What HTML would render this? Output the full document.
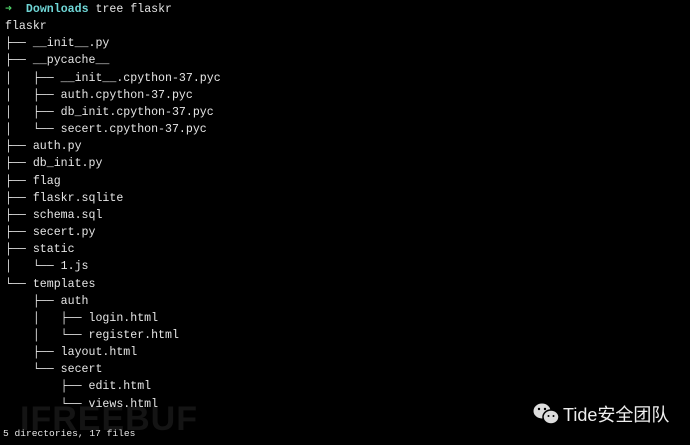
<!DOCTYPE html>
<html><head><meta charset="utf-8"><style>
html,body{margin:0;padding:0;background:#000;width:690px;height:445px;overflow:hidden;}
pre{position:absolute;left:5px;top:1px;margin:0;font-family:"Liberation Mono","DejaVu Sans Mono",monospace;font-size:11.6px;line-height:17.16px;color:#e6e6e6;}
.g{color:#4fd26a;font-weight:bold}.c{color:#6fd6d6;font-weight:bold}
.foot{position:absolute;left:3px;top:428px;font-family:"Liberation Mono",monospace;font-size:9.6px;color:#e6e6e6;}
.wm{position:absolute;left:20px;top:400px;font-family:"Liberation Sans",sans-serif;font-weight:bold;font-size:34px;color:#141414;letter-spacing:1px}
.tide{position:absolute;left:563px;top:401px;font-family:"Liberation Sans","Noto Sans CJK SC",sans-serif;font-size:18px;color:#eee}
</style></head><body>
<div class="wm">IFREEBUF</div>
<pre><span class="g">➜</span>  <span class="c">Downloads</span> tree flaskr
flaskr
├── __init__.py
├── __pycache__
│   ├── __init__.cpython-37.pyc
│   ├── auth.cpython-37.pyc
│   ├── db_init.cpython-37.pyc
│   └── secert.cpython-37.pyc
├── auth.py
├── db_init.py
├── flag
├── flaskr.sqlite
├── schema.sql
├── secert.py
├── static
│   └── 1.js
└── templates
    ├── auth
    │   ├── login.html
    │   └── register.html
    ├── layout.html
    └── secert
        ├── edit.html
        └── views.html
</pre>
<div class="foot">5 directories, 17 files</div>
<svg style="position:absolute;left:532px;top:402px" width="30" height="24"><ellipse cx="10" cy="9" rx="8.5" ry="7.5" fill="#ddd"/><ellipse cx="19" cy="15" rx="8" ry="7" fill="#ddd" stroke="#000" stroke-width="1.5"/><circle cx="7" cy="7" r="1.2" fill="#000"/><circle cx="13" cy="7" r="1.2" fill="#000"/><circle cx="16.5" cy="14" r="1" fill="#000"/><circle cx="21.5" cy="14" r="1" fill="#000"/></svg>
<div class="tide">Tide安全团队</div>
</body></html>
